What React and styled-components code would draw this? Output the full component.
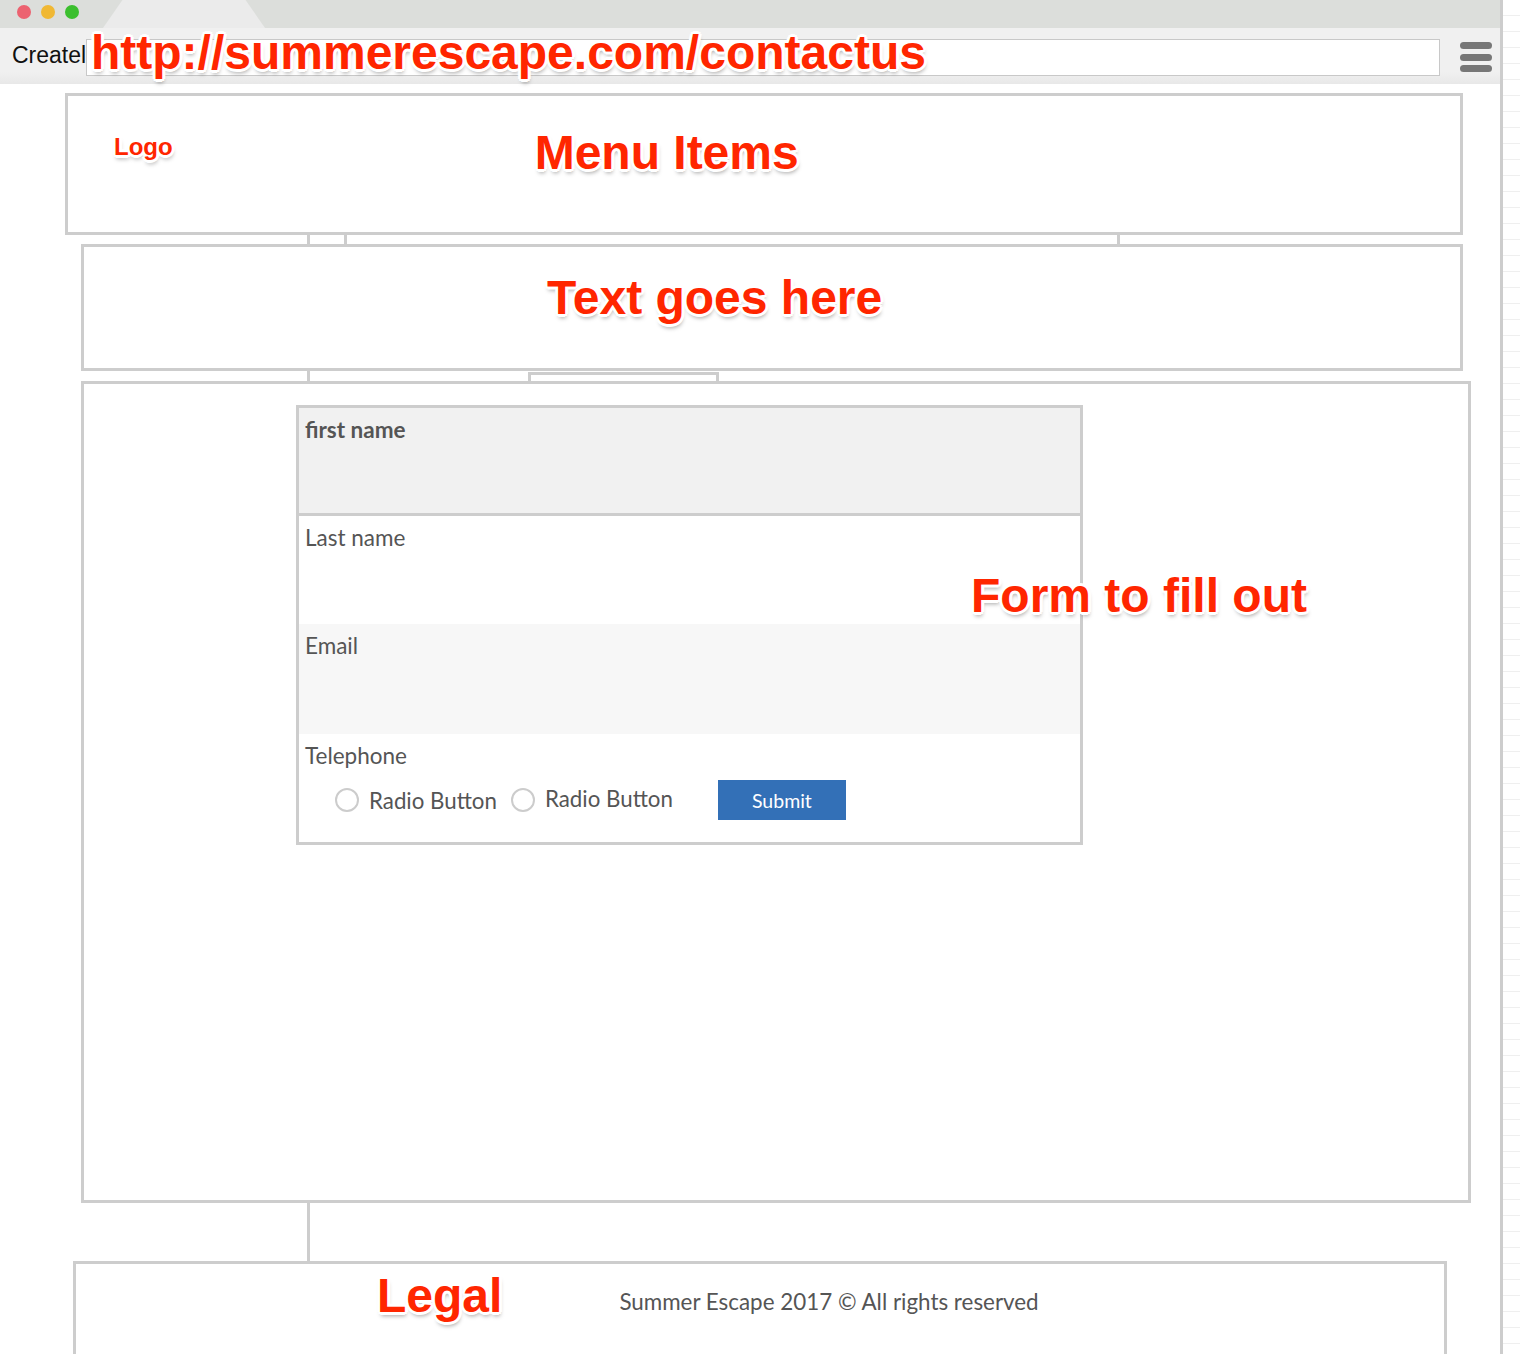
import React from "react";
import styled, { createGlobalStyle } from "styled-components";

const GlobalStyle = createGlobalStyle`
   html, body {
      margin: 0;
      padding: 0;
      background: #ffffff;
   }
   body {
      font-family: "Lato", "Open Sans", sans-serif;
      overflow: hidden;
   }
`;

export default function App() {
   return (
      <>
         <GlobalStyle />
         <Screen>
            <Window>
               <TitleBar>
                  <Light color="#ec6270" />
                  <Light color="#f0b834" />
                  <Light color="#3bbf2e" />
                  <Tab />
               </TitleBar>
               <Toolbar>
                  <TabLabel>Createl</TabLabel>
                  <AddressBox />
                  <Hamburger>
                     <Bar />
                     <Bar />
                     <Bar />
                  </Hamburger>
                  <UrlNote>http://summerescape.com/contactus</UrlNote>
               </Toolbar>

               <Page>
                  <HeaderBox>
                     <Note size={24} top={39} left={46}>Logo</Note>
                     <Note top={33} left={362}>Menu Items</Note>
                  </HeaderBox>
                  <Connector height={9}>
                     <rect x="307" y="0" width="3" height="9" fill="#cdcdcd" />
                     <rect x="344" y="0" width="3" height="9" fill="#cdcdcd" />
                     <rect x="1117" y="0" width="3" height="9" fill="#cdcdcd" />
                  </Connector>
                  <TextBox>
                     <Note top={27} left={463}>Text goes here</Note>
                  </TextBox>
                  <Connector height={10}>
                     <rect x="307" y="0" width="3" height="10" fill="#cdcdcd" />
                     <rect x="528" y="1" width="191" height="3" fill="#cdcdcd" />
                     <rect x="528" y="1" width="3" height="9" fill="#cdcdcd" />
                     <rect x="716" y="1" width="3" height="9" fill="#cdcdcd" />
                  </Connector>
                  <MainBox>
                     <Form>
                        <Field bg="#f1f1f1" divider>
                           <Label bold>first name</Label>
                        </Field>
                        <Field bg="#ffffff">
                           <Label>Last name</Label>
                        </Field>
                        <Field bg="#f7f7f7" tall>
                           <Label>Email</Label>
                        </Field>
                        <Field bg="#ffffff">
                           <Label>Telephone</Label>
                           <RadioRow>
                              <Radio>
                                 <Circle />
                                 <RadioText>Radio Button</RadioText>
                              </Radio>
                              <Radio>
                                 <Circle />
                                 <RadioText raised>Radio Button</RadioText>
                              </Radio>
                              <SubmitButton>Submit</SubmitButton>
                           </RadioRow>
                        </Field>
                     </Form>
                     <FormNote>Form to fill out</FormNote>
                  </MainBox>
                  <Connector height={58}>
                     <rect x="307" y="0" width="3" height="58" fill="#cdcdcd" />
                  </Connector>
                  <Footer>
                     <Note top={8} left={301}>Legal</Note>
                     <Copyright>Summer Escape 2017 © All rights reserved</Copyright>
                  </Footer>
               </Page>
            </Window>
            <GridStrip />
         </Screen>
      </>
   );
}

const Screen = styled.div`
   display: flex;
   align-items: stretch;
   width: 1520px;
   height: 1354px;
   overflow: hidden;
`;

const Window = styled.div`
   width: 1500px;
   flex-shrink: 0;
   border-right: 3px solid #cdcdcd;
`;

const GridStrip = styled.div`
   flex: 1;
   background: repeating-linear-gradient(
      to bottom,
      #ffffff 0,
      #ffffff 15px,
      #efefef 15px,
      #efefef 16px
   );
`;

const TitleBar = styled.div`
   height: 28px;
   background: #dcdedb;
   display: flex;
   align-items: center;
   gap: 10px;
   padding-left: 17px;
`;

const Light = styled.span`
   width: 14px;
   height: 14px;
   border-radius: 50%;
   background: ${(p) => p.color};
   margin-top: -5px;
`;

const Tab = styled.div`
   align-self: stretch;
   width: 162px;
   margin-left: 14px;
   background: #ebebeb;
   clip-path: polygon(12% 0, 88% 0, 100% 100%, 0 100%);
`;

const Toolbar = styled.div`
   position: relative;
   height: 56px;
   background: linear-gradient(to bottom, #f0f0f0 0, #f0f0f0 44px, #e8e8e8 56px);
   display: flex;
   align-items: center;
   padding-right: 8px;
`;

const TabLabel = styled.div`
   width: 74px;
   padding-left: 12px;
   font-family: "Liberation Sans", Arial, sans-serif;
   font-size: 23px;
   color: #111;
   white-space: nowrap;
   overflow: hidden;
   margin-top: -2px;
`;

const AddressBox = styled.div`
   flex: 1;
   height: 37px;
   margin-top: 2px;
   box-sizing: border-box;
   border: 1px solid #c8c8c8;
   background: #ffffff;
   margin-right: 20px;
`;

const Hamburger = styled.div`
   width: 32px;
   display: flex;
   flex-direction: column;
   gap: 4.5px;
   margin-top: 2px;
`;

const Bar = styled.span`
   height: 7px;
   border-radius: 4px;
   background: #777777;
`;

const noteStyle = `
   font-family: "Liberation Sans", Arial, sans-serif;
   font-weight: 700;
   color: #ff2600;
   line-height: 1;
   white-space: nowrap;
   text-shadow:
      -2px -2px 0 #fff, 2px -2px 0 #fff, -2px 2px 0 #fff, 2px 2px 0 #fff,
      0 -3px 0 #fff, 0 3px 0 #fff, -3px 0 0 #fff, 3px 0 0 #fff,
      1px 4px 4px rgba(0, 0, 0, 0.35);
`;

const Note = styled.div`
   ${noteStyle}
   font-size: ${(p) => p.size || 48}px;
   margin-top: ${(p) => p.top || 0}px;
   margin-left: ${(p) => p.left || 0}px;
`;

const UrlNote = styled.div`
   ${noteStyle}
   font-size: 48px;
   position: absolute;
   left: 91px;
   top: 1px;
`;

const Page = styled.div`
   display: flex;
   flex-direction: column;
   padding-top: 9px;
   & > * {
      flex-shrink: 0;
   }
`;

const Box = styled.div`
   box-sizing: border-box;
   border: 3px solid #cdcdcd;
   display: flex;
   align-items: flex-start;
`;

const HeaderBox = styled(Box)`
   margin-left: 65px;
   width: 1398px;
   height: 142px;
`;

const TextBox = styled(Box)`
   margin-left: 81px;
   width: 1382px;
   height: 127px;
`;

const MainBox = styled(Box)`
   position: relative;
   margin-left: 81px;
   width: 1390px;
   height: 822px;
`;

const Footer = styled(Box)`
   margin-left: 73px;
   width: 1374px;
   height: 120px;
`;

const Connector = styled.svg.attrs((p) => ({
   width: 1500,
   height: p.height,
   viewBox: `0 0 1500 ${p.height}`,
}))`
   display: block;
`;

const Form = styled.div`
   margin: 21px 0 0 212px;
   width: 787px;
   box-sizing: border-box;
   border: 3px solid #cdcdcd;
   display: flex;
   flex-direction: column;
`;

const Field = styled.div`
   height: ${(p) => (p.tall ? 110 : 108)}px;
   box-sizing: border-box;
   background: ${(p) => p.bg};
   border-bottom: ${(p) => (p.divider ? "3px solid #cdcdcd" : "none")};
   padding: 9px 0 0 6px;
`;

const Label = styled.div`
   font-family: "Lato", sans-serif;
   font-size: 22.5px;
   line-height: 26px;
   font-weight: ${(p) => (p.bold ? 700 : 400)};
   color: #555555;
`;

const RadioRow = styled.div`
   display: flex;
   align-items: center;
   height: 40px;
   margin: 11px 0 0 30px;
`;

const Radio = styled.label`
   display: flex;
   align-items: center;
   gap: 10px;
   margin-right: 14px;
`;

const Circle = styled.span`
   width: 24px;
   height: 24px;
   box-sizing: border-box;
   border-radius: 50%;
   border: 2px solid #cccccc;
   background: #ffffff;
`;

const RadioText = styled.span`
   font-family: "Lato", sans-serif;
   font-size: 22.3px;
   color: #555555;
   position: relative;
   top: ${(p) => (p.raised ? -2 : 0)}px;
`;

const SubmitButton = styled.button`
   margin-left: 31px;
   width: 128px;
   height: 40px;
   border: none;
   background: #3370b7;
   color: #ffffff;
   font-family: "Lato", sans-serif;
   font-size: 19.5px;
   padding: 0;
`;

const FormNote = styled.div`
   ${noteStyle}
   font-size: 48px;
   position: absolute;
   left: 887px;
   top: 188px;
`;

const Copyright = styled.div`
   font-family: "Lato", sans-serif;
   font-size: 22.4px;
   color: #555555;
   margin: 24px 0 0 117px;
`;
